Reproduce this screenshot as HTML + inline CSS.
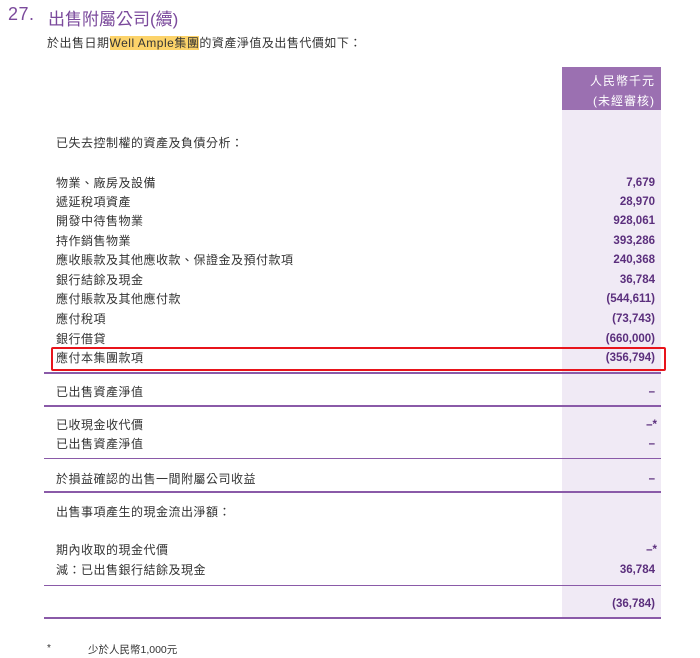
<!DOCTYPE html>
<html><head><meta charset="utf-8"><style>
body{margin:0;background:#fff;width:700px;height:658px;position:relative;overflow:hidden;font-family:"Liberation Sans","Noto Sans CJK TC",sans-serif;color:#333;}
.a{position:absolute;white-space:nowrap;}
.t{font-size:12px;left:56px;letter-spacing:0.5px;line-height:14px;}
.n{font-size:11.5px;right:45px;font-weight:bold;color:#5b2f7d;line-height:14px;text-align:right;}
.ln{position:absolute;left:44px;width:617px;background:#8a5aa8;}
</style></head><body>
<div class="a" style="left:8px;top:4px;font-size:18px;color:#7b4a9c;letter-spacing:0.5px">27.</div>
<div class="a" style="left:48px;top:5px;font-size:17px;color:#7b4a9c;letter-spacing:0px">出售附屬公司(續)</div>
<div class="a" style="left:47px;top:34px;font-size:12px;letter-spacing:0.5px">於出售日期<span style="background:#fcd36a">Well Ample集團</span>的資產淨值及出售代價如下：</div>
<div class="a" style="left:562px;top:67px;width:99px;height:43px;background:#9b70b1"></div>
<div class="a" style="left:562px;top:110px;width:99px;height:508px;background:#f0eaf5"></div>
<div class="a" style="right:45px;top:71px;font-size:12px;color:#fff;text-align:right;line-height:20px;letter-spacing:1px">人民幣千元<br>(未經審核)</div>
<div class="a t" style="top:136px">已失去控制權的資產及負債分析：</div>
<div class="a t" style="top:176px">物業、廠房及設備</div><div class="a n" style="top:176px">7,679</div>
<div class="a t" style="top:195px">遞延稅項資產</div><div class="a n" style="top:195px">28,970</div>
<div class="a t" style="top:214px">開發中待售物業</div><div class="a n" style="top:214px">928,061</div>
<div class="a t" style="top:234px">持作銷售物業</div><div class="a n" style="top:234px">393,286</div>
<div class="a t" style="top:253px">應收賬款及其他應收款、保證金及預付款項</div><div class="a n" style="top:253px">240,368</div>
<div class="a t" style="top:273px">銀行結餘及現金</div><div class="a n" style="top:273px">36,784</div>
<div class="a t" style="top:292px">應付賬款及其他應付款</div><div class="a n" style="top:292px">(544,611)</div>
<div class="a t" style="top:312px">應付稅項</div><div class="a n" style="top:312px">(73,743)</div>
<div class="a t" style="top:332px">銀行借貸</div><div class="a n" style="top:332px">(660,000)</div>
<div class="a t" style="top:351px">應付本集團款項</div><div class="a n" style="top:351px">(356,794)</div>
<div class="a" style="left:51px;top:347px;width:611px;height:20px;border:2px solid #e8141b;border-radius:2px"></div>
<div class="ln" style="top:372px;height:2px"></div>
<div class="a t" style="top:385px">已出售資產淨值</div><div class="a n" style="top:385px">–</div>
<div class="ln" style="top:405px;height:2px"></div>
<div class="a t" style="top:418px">已收現金收代價</div><div class="a n" style="top:418px;right:43px">–*</div>
<div class="a t" style="top:437px">已出售資產淨值</div><div class="a n" style="top:437px">–</div>
<div class="ln" style="top:458px;height:1px"></div>
<div class="a t" style="top:472px">於損益確認的出售一間附屬公司收益</div><div class="a n" style="top:472px">–</div>
<div class="ln" style="top:491px;height:2px"></div>
<div class="a t" style="top:505px">出售事項產生的現金流出淨額：</div>
<div class="a t" style="top:543px">期內收取的現金代價</div><div class="a n" style="top:543px;right:43px">–*</div>
<div class="a t" style="top:563px">減：已出售銀行結餘及現金</div><div class="a n" style="top:563px">36,784</div>
<div class="ln" style="top:585px;height:1px"></div>
<div class="a n" style="top:597px">(36,784)</div>
<div class="ln" style="top:617px;height:2px"></div>
<div class="a" style="left:47px;top:643px;font-size:10px">*</div>
<div class="a" style="left:88px;top:642px;font-size:10.5px">少於人民幣1,000元</div>
</body></html>
